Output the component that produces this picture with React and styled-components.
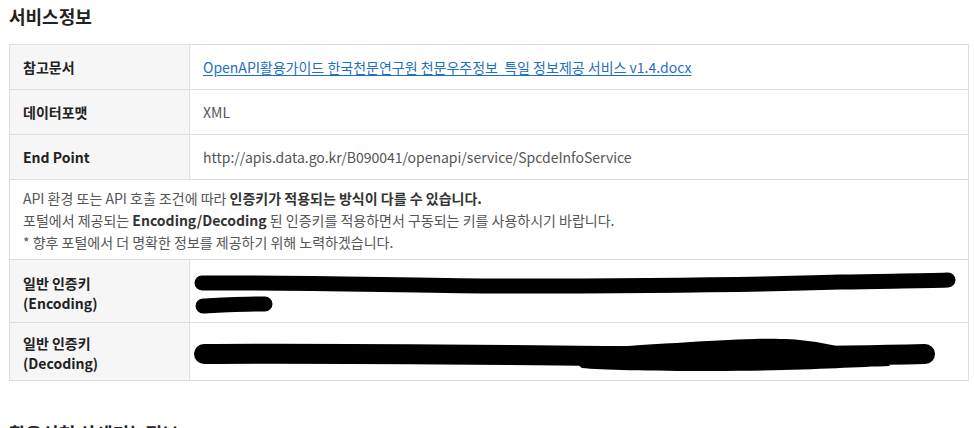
import React from "react";
import styled, { createGlobalStyle } from "styled-components";

const GlobalStyle = createGlobalStyle`
  html, body {
    margin: 0;
    padding: 0;
    background: #fff;
  }
  body {
    font-family: "Noto Sans CJK KR", "Noto Sans", sans-serif;
    color: #333;
  }
`;

const Page = styled.div`
  padding: 0 6px 0 9px;
  width: 974px;
  height: 428px;
  box-sizing: border-box;
  overflow: hidden;
`;

const Title = styled.h3`
  margin: 0;
  padding-top: 2px;
  font-size: 18px;
  line-height: 28px;
  font-weight: 700;
  color: #222;
  margin-bottom: 14px;
  margin-top: ${(p) => p.$top || 0}px;
`;

const Table = styled.div`
  width: 960px;
  border-top: 1px solid #dedede;
  border-left: 1px solid #dedede;
  box-sizing: border-box;
`;

const Row = styled.div`
  display: grid;
  grid-template-columns: ${(p) => (p.$full ? "1fr" : "180px 1fr")};
  height: ${(p) => p.$h}px;
`;

const Cell = styled.div`
  position: relative;
  display: flex;
  align-items: center;
  padding: 0 13px;
  border-right: 1px solid #dedede;
  border-bottom: 1px solid #dedede;
  font-size: 14px;
  line-height: 20px;
  color: #555;
  overflow: hidden;
`;

const Label = styled(Cell)`
  background: #f6f6f6;
  color: #222;
  font-weight: 700;
  padding-top: ${(p) => p.$shift || 0}px;
`;

const Note = styled(Cell)`
  display: block;
  padding: 7px 13px;
  line-height: 22px;
  color: #555;
  b {
    color: #333;
    font-weight: 700;
  }
`;

const DocLink = styled.a`
  color: #1f6fc5;
  text-decoration: underline;
  text-underline-offset: 2px;
  white-space: pre;
`;

const Marker = styled.svg`
  position: absolute;
  left: 0;
  top: 0;
  width: 100%;
  height: 100%;
`;

function EncodingMark() {
  return (
    <Marker viewBox="0 0 778 62" preserveAspectRatio="none">
      <path
        d="M12 23 C 120 22, 220 26, 300 26 C 450 26, 560 25, 650 22 C 700 21, 730 21, 758 20"
        stroke="#000"
        strokeWidth="15"
        strokeLinecap="round"
        fill="none"
      />
      <path d="M13 46 C 35 45, 55 44, 75 44" stroke="#000" strokeWidth="15" strokeLinecap="round" fill="none" />
    </Marker>
  );
}

function DecodingMark() {
  return (
    <Marker viewBox="0 0 778 57" preserveAspectRatio="none">
      <path
        d="M14 31 C 150 30, 300 32, 420 33 C 560 34, 660 33, 735 31"
        stroke="#000"
        strokeWidth="20"
        strokeLinecap="round"
        fill="none"
      />
      <path
        d="M385 26 C 460 22, 520 17, 565 16 C 605 15, 625 18, 650 24 L 690 28 L 700 43 C 660 44, 610 48, 520 48 C 460 48, 410 47, 392 45 C 385 40, 384 32, 385 26 Z"
        fill="#000"
      />
    </Marker>
  );
}

export default function App() {
  return (
    <Page>
      <GlobalStyle />
      <Title>서비스정보</Title>
      <Table>
        <Row $h={45}>
          <Label>참고문서</Label>
          <Cell>
            <DocLink href="#">
              {"OpenAPI활용가이드 한국천문연구원 천문우주정보  특일 정보제공 서비스 v1.4.docx"}
            </DocLink>
          </Cell>
        </Row>
        <Row $h={45}>
          <Label>데이터포맷</Label>
          <Cell>XML</Cell>
        </Row>
        <Row $h={45}>
          <Label>End Point</Label>
          <Cell>http://apis.data.go.kr/B090041/openapi/service/SpcdeInfoService</Cell>
        </Row>
        <Row $full $h={80}>
          <Note>
            API 환경 또는 API 호출 조건에 따라 <b>인증키가 적용되는 방식이 다를 수 있습니다.</b>
            <br />
            포털에서 제공되는 <b>Encoding/Decoding</b> 된 인증키를 적용하면서 구동되는 키를 사용하시기 바랍니다.
            <br />* 향후 포털에서 더 명확한 정보를 제공하기 위해 노력하겠습니다.
          </Note>
        </Row>
        <Row $h={63}>
          <Label $shift={4}>
            일반 인증키
            <br />
            (Encoding)
          </Label>
          <Cell>
            <EncodingMark />
          </Cell>
        </Row>
        <Row $h={58}>
          <Label $shift={2}>
            일반 인증키
            <br />
            (Decoding)
          </Label>
          <Cell>
            <DecodingMark />
          </Cell>
        </Row>
      </Table>
      <Title $top={36}>활용신청 상세기능정보</Title>
    </Page>
  );
}
